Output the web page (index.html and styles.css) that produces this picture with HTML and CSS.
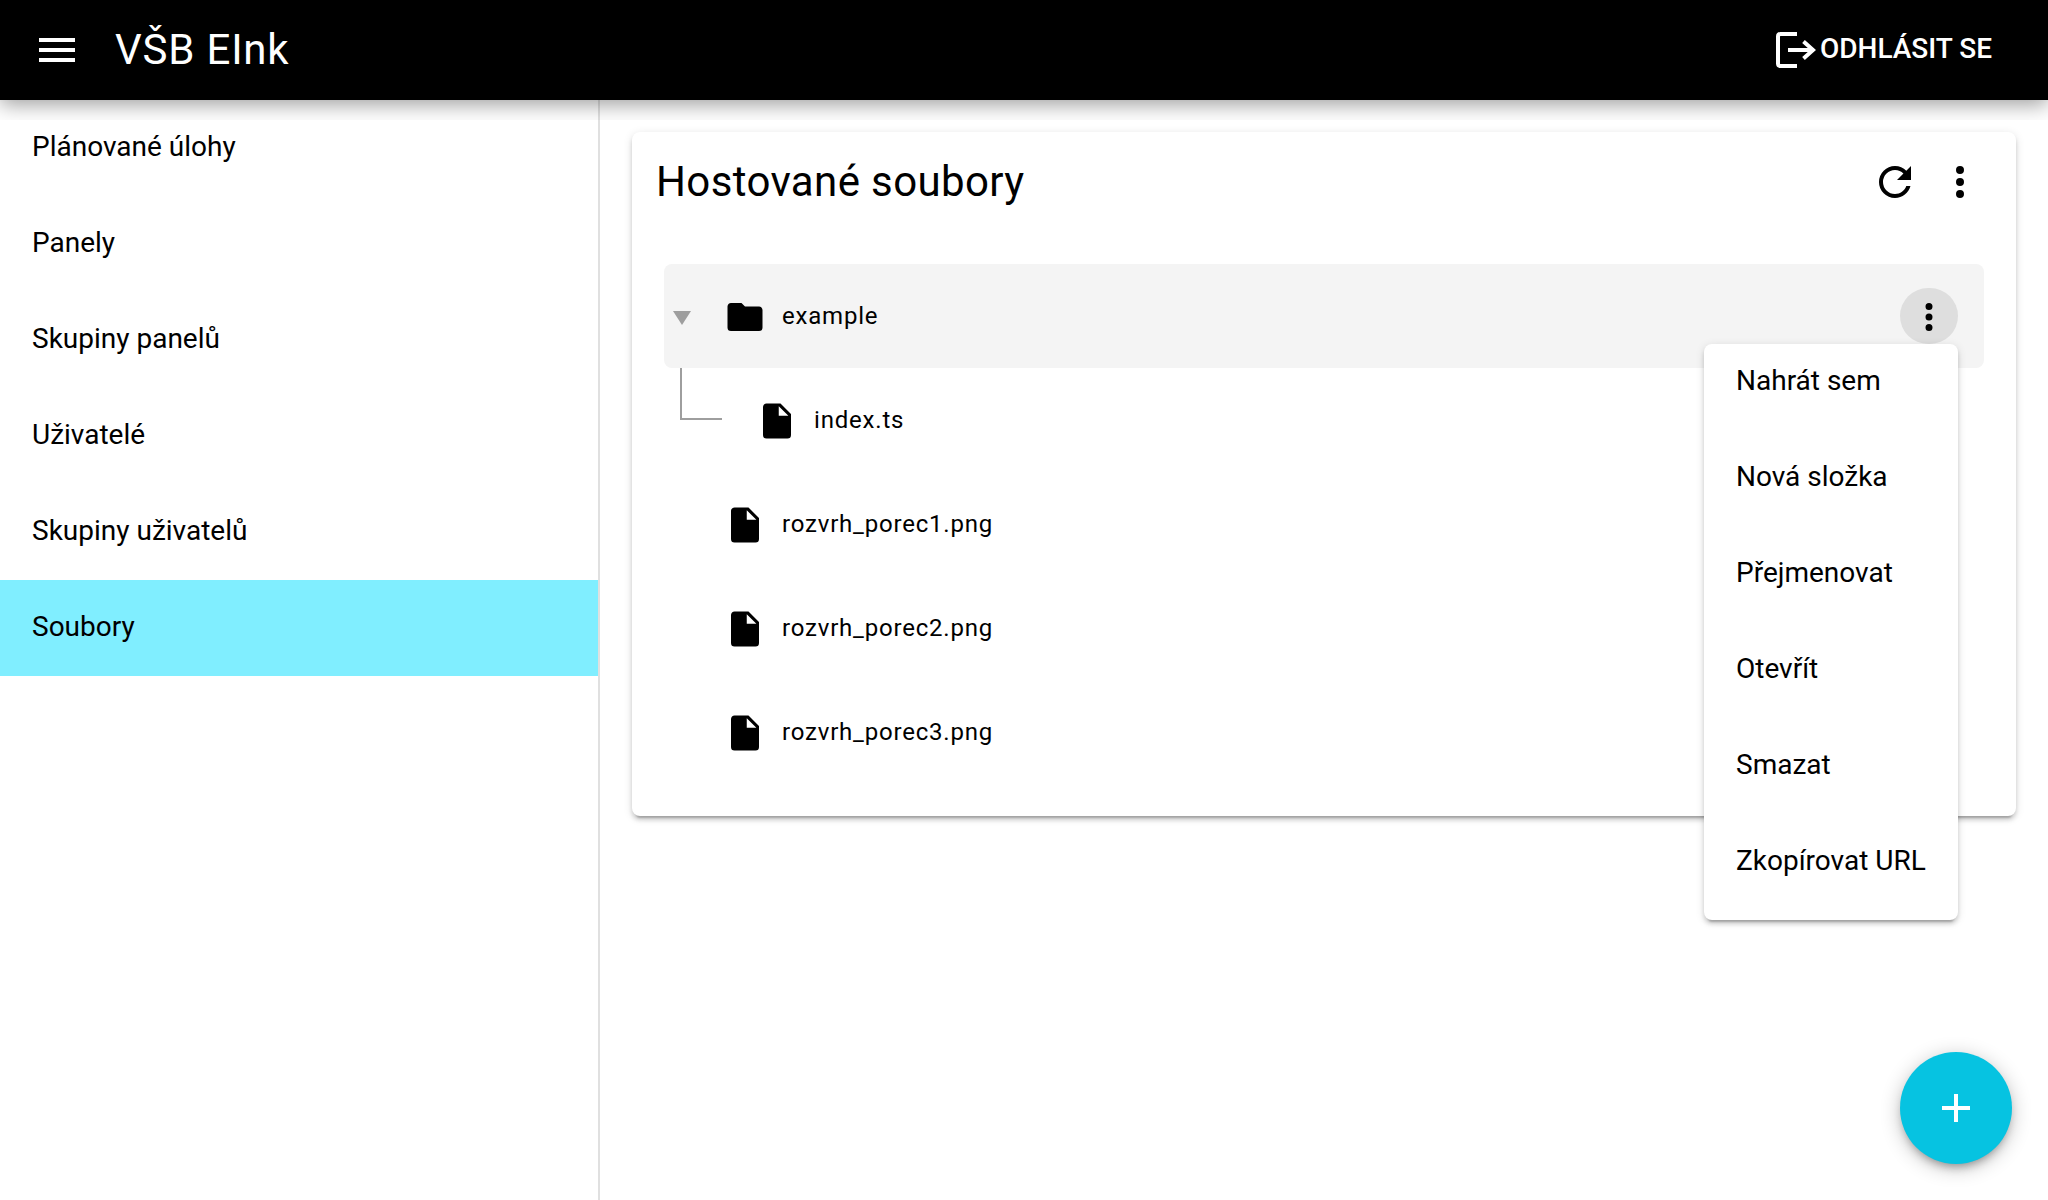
FILE: index.html
```html
<!DOCTYPE html>
<html lang="cs">
<head>
<meta charset="utf-8">
<title>VŠB EInk</title>
<link rel="stylesheet" href="styles.css">
</head>
<body>
<svg class="defs" aria-hidden="true">
  <symbol id="dots" viewBox="0 0 24 24"><path d="M12,16A2,2 0 0,1 14,18A2,2 0 0,1 12,20A2,2 0 0,1 10,18A2,2 0 0,1 12,16M12,10A2,2 0 0,1 14,12A2,2 0 0,1 12,14A2,2 0 0,1 10,12A2,2 0 0,1 12,10M12,4A2,2 0 0,1 14,6A2,2 0 0,1 12,8A2,2 0 0,1 10,6A2,2 0 0,1 12,4Z"/></symbol>
  <symbol id="file" viewBox="0 0 24 24"><path d="M13,9V3.5L18.5,9M6,2C4.89,2 4,2.89 4,4V20A2,2 0 0,0 6,22H18A2,2 0 0,0 20,20V8L14,2H6Z"/></symbol>
</svg>
<header class="topbar">
  <button class="menu-button" aria-label="Menu"><svg class="icon" viewBox="0 0 24 24"><path d="M3,6H21V8H3V6M3,11H21V13H3V11M3,16H21V18H3V16Z"/></svg></button>
  <h1 class="brand">VŠB EInk</h1>
  <button class="logout">
    <svg class="logout-icon" viewBox="0 0 40 36"><path d="M21,2H4.500Q2,2 2,4.500V31.500Q2,34 4.500,34H21M12,18H37M27.500,9.500L37,18L27.500,26.500"/></svg>
    <span>ODHLÁSIT SE</span>
  </button>
</header>
<div class="layout">
  <nav class="sidebar">
    <a class="nav-item">Plánované úlohy</a>
    <a class="nav-item">Panely</a>
    <a class="nav-item">Skupiny panelů</a>
    <a class="nav-item">Uživatelé</a>
    <a class="nav-item">Skupiny uživatelů</a>
    <a class="nav-item active">Soubory</a>
  </nav>
  <main class="content">
    <section class="card">
      <div class="card-head">
        <h2 class="card-title">Hostované soubory</h2>
        <svg class="icon" viewBox="0 0 24 24"><path d="M17.65,6.35C16.2,4.9 14.21,4 12,4A8,8 0 0,0 4,12A8,8 0 0,0 12,20C15.73,20 18.84,17.45 19.73,14H17.65C16.83,16.33 14.61,18 12,18A6,6 0 0,1 6,12A6,6 0 0,1 12,6C13.66,6 15.14,6.69 16.22,7.78L13,11H20V4L17.65,6.35Z"/></svg>
        <svg class="icon"><use href="#dots"/></svg>
      </div>
      <div class="tree">
        <div class="row hovered">
          <span class="caret"></span>
          <svg class="row-icon" viewBox="0 0 24 24"><path d="M10,4H4C2.89,4 2,4.89 2,6V18A2,2 0 0,0 4,20H20A2,2 0 0,0 22,18V8C22,6.89 21.1,6 20,6H12L10,4Z"/></svg>
          <span class="label">example</span>
          <div class="actions">
            <button class="more" aria-label="Akce"><svg class="row-icon"><use href="#dots"/></svg></button>
            <div class="menu">
              <a class="menu-item">Nahrát sem</a>
              <a class="menu-item">Nová složka</a>
              <a class="menu-item">Přejmenovat</a>
              <a class="menu-item">Otevřít</a>
              <a class="menu-item">Smazat</a>
              <a class="menu-item">Zkopírovat URL</a>
            </div>
          </div>
        </div>
        <div class="row child"><span class="branch"></span><svg class="row-icon"><use href="#file"/></svg><span class="label">index.ts</span></div>
        <div class="row leaf"><svg class="row-icon"><use href="#file"/></svg><span class="label">rozvrh_porec1.png</span></div>
        <div class="row leaf"><svg class="row-icon"><use href="#file"/></svg><span class="label">rozvrh_porec2.png</span></div>
        <div class="row leaf"><svg class="row-icon"><use href="#file"/></svg><span class="label">rozvrh_porec3.png</span></div>
      </div>
    </section>
  </main>
</div>
<button class="fab" aria-label="Přidat"><svg class="icon" viewBox="0 0 24 24"><path d="M19,13H13V19H11V13H5V11H11V5H13V11H19V13Z"/></svg></button>
</body>
</html>
```
FILE: styles.css
```css
* { box-sizing: border-box; }
body {
  margin: 0;
  height: 1200px;
  display: flex;
  flex-direction: column;
  overflow: hidden;
  font: 400 28px/40px Roboto, sans-serif;
  color: #000;
  background: #fff;
}
button { border: 0; padding: 0; font: inherit; color: inherit; background: none; }
svg { fill: currentColor; display: block; flex: none; }
.defs { position: absolute; width: 0; height: 0; }
.icon { width: 48px; height: 48px; }

.topbar {
  position: relative;
  z-index: 2;
  flex: none;
  height: 100px;
  padding: 0 56px 0 33px;
  display: flex;
  align-items: center;
  color: #fff;
  background: #000;
  box-shadow: 0 4px 20px rgba(0,0,0,.4);
  clip-path: inset(0 0 -20px 0);
}
.brand { margin: 0 0 0 34px; font-size: 42px; font-weight: 400; line-height: 56px; letter-spacing: .019em; }
.logout { margin-left: auto; display: flex; align-items: center; gap: 4px; font-weight: 500; }
.logout span { padding-bottom: 3px; }
.logout-icon { width: 40px; height: 36px; fill: none; stroke: currentColor; stroke-width: 4; }

.layout { flex: 1; display: flex; min-height: 0; }
.sidebar { width: 600px; border-right: 2px solid #e0e0e0; }
.nav-item { display: flex; align-items: center; height: 96px; padding: 0 32px 2px; }
.nav-item.active { background: #80eeff; }

.content { flex: 1; padding: 32px; }
.card {
  padding: 26px 32px 32px;
  border-radius: 8px;
  background: #fff;
  box-shadow: 0 6px 2px -4px rgba(0,0,0,.2), 0 4px 4px 0 rgba(0,0,0,.14), 0 2px 10px 0 rgba(0,0,0,.12);
}
.card-head { display: flex; align-items: center; gap: 17px; height: 48px; margin: 0 0 58px -8px; }
.card-title { flex: 1; margin: 0; font-size: 42px; font-weight: 400; letter-spacing: .009em; }
.row { display: flex; align-items: center; height: 104px; padding-right: 26px; border-radius: 8px; font-size: 24px; letter-spacing: .0333em; }
.hovered { background: #f4f4f4; }
.row-icon { width: 42px; height: 42px; margin-top: 2px; }
.label { margin-left: 16px; padding-bottom: 1px; }
.caret { margin: 4px 33px 0 9px; border: solid transparent; border-width: 14px 9px 0; border-top-color: #9e9e9e; }
.leaf { padding-left: 60px; }
.branch { align-self: flex-start; width: 42px; height: 52px; margin: 0 34px 0 16px; border: solid #9e9e9e; border-width: 0 0 2px 2px; }
.actions { position: relative; margin-left: auto; }
.more { display: flex; justify-content: center; align-items: center; width: 58px; height: 56px; border-radius: 29px; background: #dedede; }
.menu {
  position: absolute;
  top: 56px;
  right: 0;
  width: 254px;
  border-radius: 8px;
  background: #fff;
  font-size: 28px;
  letter-spacing: 0;
  white-space: nowrap;
  box-shadow: 0 6px 2px -4px rgba(0,0,0,.2), 0 4px 4px 0 rgba(0,0,0,.14), 0 2px 10px 0 rgba(0,0,0,.12);
}
.menu-item { display: flex; align-items: center; height: 96px; padding: 0 32px 22px; }
.fab {
  position: absolute;
  right: 36px;
  bottom: 36px;
  width: 112px;
  height: 112px;
  display: flex;
  align-items: center;
  justify-content: center;
  border-radius: 50%;
  color: #fff;
  background: #06c3e1;
  box-shadow: 0 6px 10px -4px rgba(0,0,0,.35), 0 4px 20px 0 rgba(0,0,0,.24);
}
```
